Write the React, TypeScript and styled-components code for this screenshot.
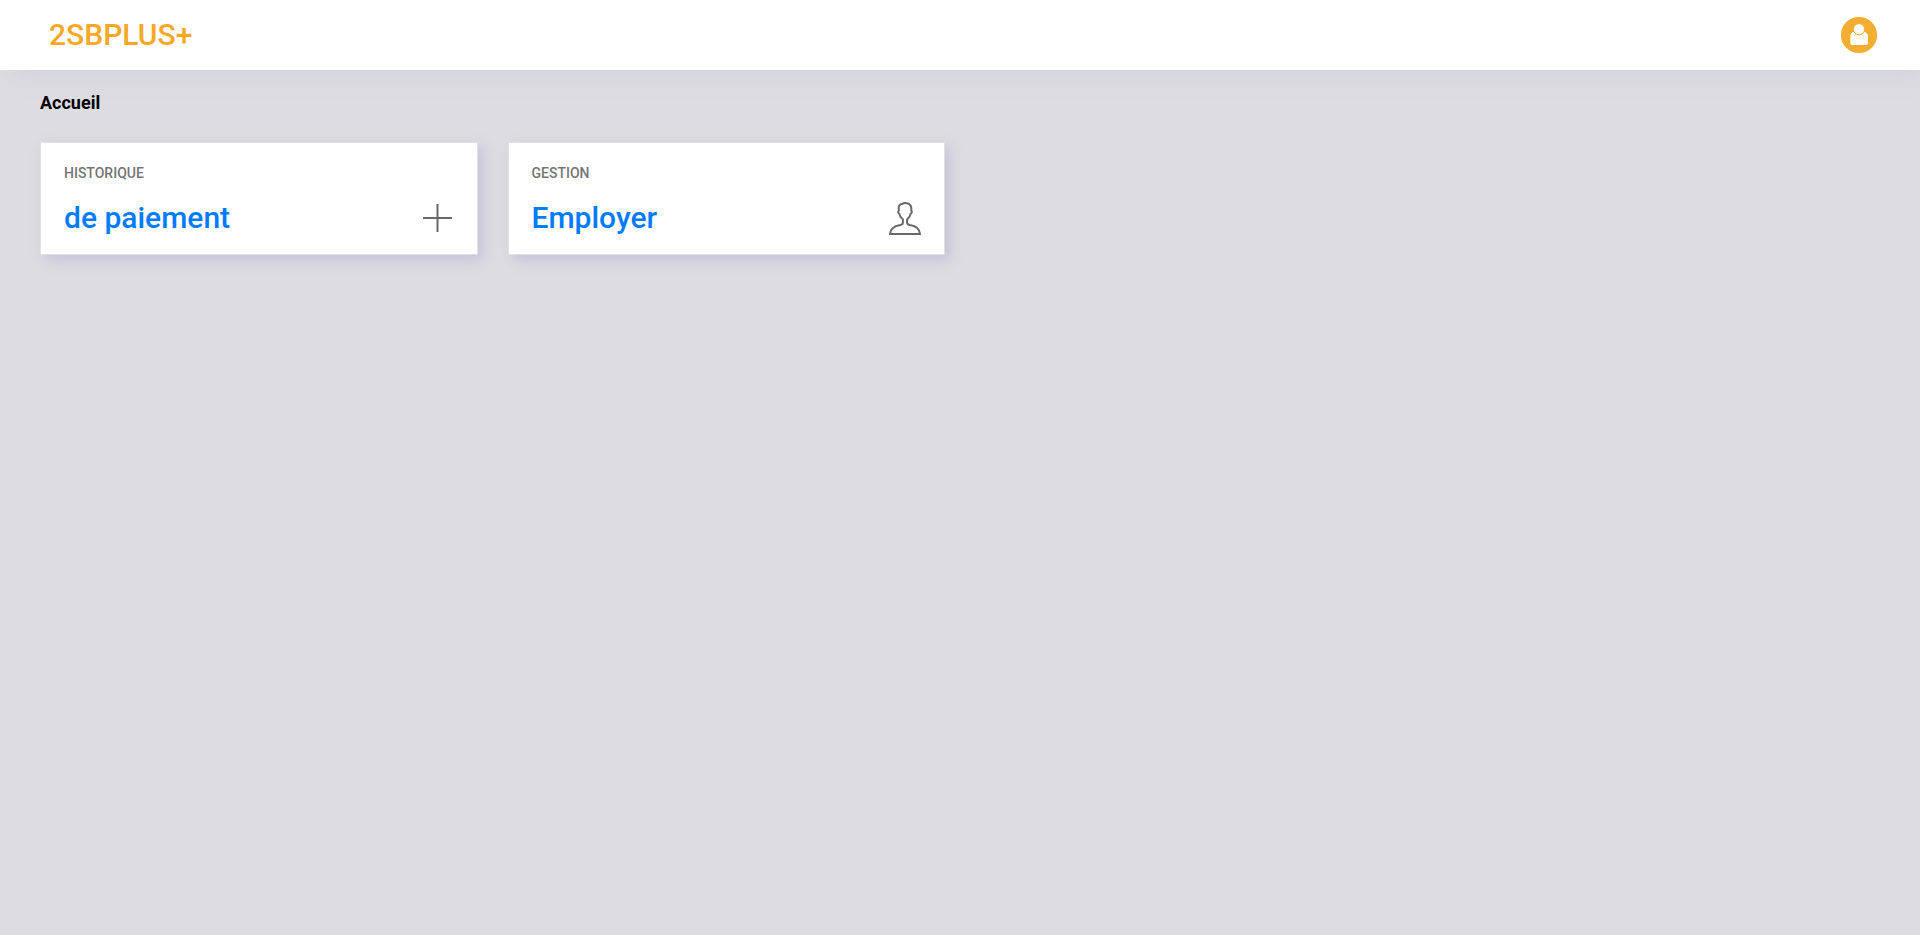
import React from 'react';
import styled, { createGlobalStyle } from 'styled-components';

const GlobalStyle = createGlobalStyle`
  *, *::before, *::after { box-sizing: border-box; }
  body {
    margin: 0;
    background: #dddce1;
    color: #000;
    font-family: Roboto, "Liberation Sans", sans-serif;
  }
`;

const Header = styled.header`
  position: relative;
  display: flex;
  align-items: center;
  justify-content: space-between;
  height: 70px;
  padding: 0 42px 0 49px;
  background: #fff;
  box-shadow: 8px 4px 28px -4px rgba(154, 161, 211, 0.22);
`;

const Brand = styled.a`
  color: #f9a826;
  font-size: 30px;
  font-weight: 500;
  line-height: 70px;
  text-decoration: none;
`;

const AccountButton = styled.button`
  display: block;
  width: 38px;
  height: 38px;
  padding: 0;
  border: 0;
  border-radius: 50%;
  background: none;
  cursor: pointer;

  svg { display: block; }
`;

const Content = styled.main`
  padding: 20px 40px;
`;

const PageTitle = styled.h1`
  margin: 0 0 26px;
  font-size: 18px;
  font-weight: 700;
  line-height: 26px;
`;

const Cards = styled.div`
  display: grid;
  grid-template-columns: repeat(4, 1fr);
  gap: 30px;
`;

const Card = styled.section`
  padding: 20px 23px 17px;
  border: 1px solid #e1e1e5;
  background: #fff;
  box-shadow: 5px 5px 12px 0 rgba(154, 148, 201, 0.36);
`;

const CardLabel = styled.h2`
  margin: 0 0 16px;
  color: #757575;
  font-size: 14px;
  font-weight: 500;
  line-height: 20px;
`;

const CardBody = styled.div`
  display: flex;
  align-items: center;
  justify-content: space-between;
`;

const CardLink = styled.a`
  color: #007bff;
  font-size: 30px;
  font-weight: 500;
  line-height: 38px;
  text-decoration: none;
`;

const CardIcon = styled.svg`
  display: block;
  width: 32px;
  height: 34px;
  fill: none;
  stroke: #686868;
  stroke-width: 2;
`;

const AccountIcon = () => (
  <svg width="38" height="38" viewBox="0 0 38 38" aria-hidden="true">
    <circle cx="19" cy="19" r="18.1" fill="#f3ae31" />
    <path
      d="M13.500 16h11c2.200 0 3.500 2.200 3.500 5v5.500q0 2.500-2.500 2.500H12.800q-2.500 0-2.500-2.500V21c0-2.800 1.200-5 3.200-5z"
      fill="#fff"
    />
    <circle cx="19" cy="13.200" r="5.600" fill="#fff" stroke="#f3ae31" strokeWidth="1" />
  </svg>
);

const PlusIcon = () => (
  <CardIcon viewBox="0 0 32 34" aria-hidden="true">
    <path d="M1 17h29M15.500 3v28" />
  </CardIcon>
);

const UserIcon = () => (
  <CardIcon viewBox="0 -1 32 34" aria-hidden="true">
    <path d="M13.900 17.500v3c0 1.500-.8 2.200-2.700 2.600C5 24.200 1.300 27.500 1 32h30c-.3-4.500-4-7.800-10.200-8.900-1.900-.4-2.700-1.100-2.700-2.600v-3c2.200-1.800 3.300-3.600 3.400-5.500 1.600-1 1.500-2.500.8-3.500C22.800 3.800 21.300 2 18 1.300c-1.800-.4-3.600-.3-4.300.4-3.500.2-4.400 2.400-3.900 6.800-.9 1.200-.7 2.700.6 3.500.2 2 1.300 3.700 3.500 5.500z" />
  </CardIcon>
);

const items = [
  { label: 'HISTORIQUE', title: 'de paiement', Icon: PlusIcon },
  { label: 'GESTION', title: 'Employer', Icon: UserIcon },
];

export default function App() {
  return (
    <>
      <GlobalStyle />
      <Header>
        <Brand href="#">2SBPLUS+</Brand>
        <AccountButton type="button" aria-label="Compte">
          <AccountIcon />
        </AccountButton>
      </Header>
      <Content>
        <PageTitle>Accueil</PageTitle>
        <Cards>
          {items.map(({ label, title, Icon }) => (
            <Card key={label}>
              <CardLabel>{label}</CardLabel>
              <CardBody>
                <CardLink href="#">{title}</CardLink>
                <Icon />
              </CardBody>
            </Card>
          ))}
        </Cards>
      </Content>
    </>
  );
}
